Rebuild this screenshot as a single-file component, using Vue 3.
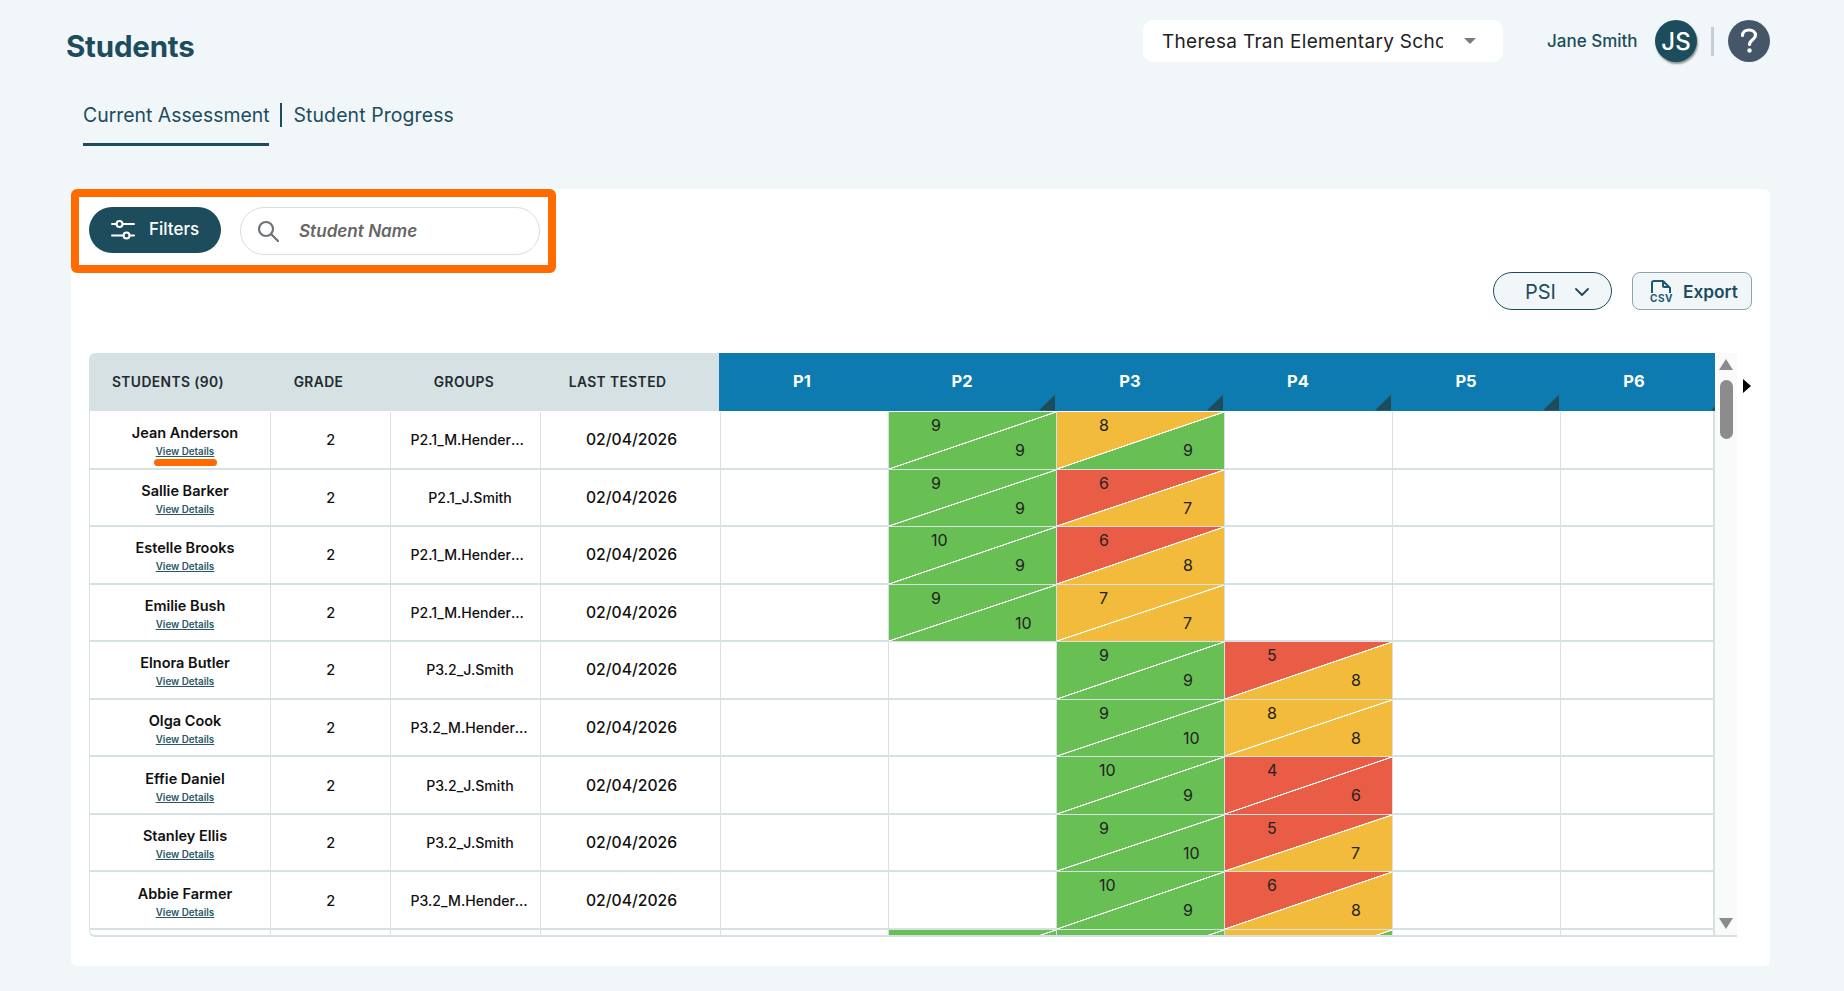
<script setup>
const pCols = ['P1', 'P2', 'P3', 'P4', 'P5', 'P6']
const heads = ['STUDENTS (90)', 'GRADE', 'GROUPS', 'LAST TESTED']
const M = 'M.Henderson'
const J = 'J.Smith'
const rows = [
  { name: 'Jean Anderson', group: 'P2.1_' + M, start: 1, cells: [['g', 'g', 9, 9], ['y', 'g', 8, 9]] },
  { name: 'Sallie Barker', group: 'P2.1_' + J, start: 1, cells: [['g', 'g', 9, 9], ['r', 'y', 6, 7]] },
  { name: 'Estelle Brooks', group: 'P2.1_' + M, start: 1, cells: [['g', 'g', 10, 9], ['r', 'y', 6, 8]] },
  { name: 'Emilie Bush', group: 'P2.1_' + M, start: 1, cells: [['g', 'g', 9, 10], ['y', 'y', 7, 7]] },
  { name: 'Elnora Butler', group: 'P3.2_' + J, start: 2, cells: [['g', 'g', 9, 9], ['r', 'y', 5, 8]] },
  { name: 'Olga Cook', group: 'P3.2_' + M, start: 2, cells: [['g', 'g', 9, 10], ['y', 'y', 8, 8]] },
  { name: 'Effie Daniel', group: 'P3.2_' + J, start: 2, cells: [['g', 'g', 10, 9], ['r', 'r', 4, 6]] },
  { name: 'Stanley Ellis', group: 'P3.2_' + J, start: 2, cells: [['g', 'g', 9, 10], ['r', 'y', 5, 7]] },
  { name: 'Abbie Farmer', group: 'P3.2_' + M, start: 2, cells: [['g', 'g', 10, 9], ['r', 'y', 6, 8]] },
  { name: '', group: '', start: 1, cells: [['g', 'g', '', ''], ['g', 'g', '', ''], ['y', 'g', '', '']] }
]
function cellAt(row, i) {
  return row.cells[i - row.start] || null
}
</script>

<template>
  <div class="page">
    <header class="topbar">
      <h1 class="title">Students</h1>
      <div class="school">
        <span class="school-name">Theresa Tran Elementary School</span>
        <span class="caret"></span>
      </div>
      <span class="user">Jane Smith</span>
      <span class="avatar">JS</span>
      <span class="vsep"></span>
      <span class="help">
        <svg width="18" height="26" viewBox="0 0 18 26" fill="none">
          <path d="M2.500 7.500C2.500 4 5.300 2 9 2s6.500 2.100 6.500 5.300c0 4.400-6 4.400-6 9.200" stroke="#fff" stroke-width="3.200" stroke-linecap="round"/>
          <circle cx="9.500" cy="22.500" r="2.200" fill="#fff"/>
        </svg>
      </span>
    </header>

    <nav class="tabs">
      <span class="tab active">Current Assessment</span>
      <span class="tab-sep"></span>
      <span class="tab second">Student Progress</span>
    </nav>

    <main class="card">
      <div class="highlight"></div>
      <div class="filters">
        <button class="btn-filter">
          <svg width="24" height="22" viewBox="0 0 24 22" fill="none" stroke="#fff" stroke-width="2" stroke-linecap="round">
            <path d="M1 5h4.500M11.500 5H23M1 16.500h11.500M18.500 16.500H23"/>
            <circle cx="8.500" cy="5" r="3"/>
            <circle cx="15.500" cy="16.500" r="3"/>
          </svg>
          <span class="filter-label">Filters</span>
        </button>
        <div class="search">
          <svg width="22" height="22" viewBox="0 0 22 22" fill="none" stroke-width="2.200">
            <circle cx="9" cy="9" r="7" stroke="#6d7378"/>
            <path d="M14 14l7 7" stroke="#6d7378" stroke-linecap="round"/>
          </svg>
          <span class="search-label">Student Name</span>
        </div>
      </div>

      <div class="actions">
        <button class="btn-psi">
          <span>PSI</span>
          <svg width="14" height="8" viewBox="0 0 14 8" fill="none" stroke="#1d4d5c" stroke-width="1.800" stroke-linecap="round" stroke-linejoin="round">
            <path d="M1 1l6 6 6-6"/>
          </svg>
        </button>
        <button class="btn-export">
          <span class="csv-icon">
            <svg width="22" height="14" viewBox="0 0 22 14" fill="none" stroke="#1d5a70" stroke-width="2" stroke-linejoin="round">
              <path d="M2 13V3a2 2 0 0 1 2-2h9l7 7v5M13 1v5a1 1 0 0 0 1 1h6"/>
            </svg>
            <b>CSV</b>
          </span>
          <span>Export</span>
        </button>
      </div>

      <div class="table-wrap">
        <div class="table">
          <div class="thead">
            <div v-for="h in heads" :key="h" class="th">{{ h }}</div>
            <div class="th-gap"></div>
            <div v-for="(p, i) in pCols" :key="p" class="pth" :class="{ sortable: i > 0 }">
              {{ p }}
            </div>
          </div>
          <div class="tbody">
            <div v-for="(r, ri) in rows" :key="ri" class="tr">
              <div class="td student">
                <template v-if="r.name">
                  <span class="name">{{ r.name }}</span>
                  <a class="details">View Details</a>
                  <span v-if="ri === 0" class="mark"></span>
                </template>
              </div>
              <div class="td grade">{{ r.name ? 2 : '' }}</div>
              <div class="td groups"><span>{{ r.group }}</span></div>
              <div class="td date">{{ r.name ? '02/04/2026' : '' }}</div>
              <div v-for="(p, i) in pCols" :key="p" class="td pcell">
                <div
                  v-if="cellAt(r, i)"
                  class="score"
                  :class="['t-' + cellAt(r, i)[0], 'b-' + cellAt(r, i)[1]]"
                >
                  <span class="n1">{{ cellAt(r, i)[2] }}</span>
                  <span class="n2">{{ cellAt(r, i)[3] }}</span>
                </div>
              </div>
            </div>
          </div>
        </div>
        <div class="vscroll">
          <span class="arrow-up"></span>
          <span class="thumb"></span>
          <span class="arrow-down"></span>
        </div>
        <span class="arrow-right"></span>
      </div>
    </main>
  </div>
</template>

<style>
html, body { margin: 0; background: #f1f6f9; }
</style>

<style scoped>
* { box-sizing: border-box; }
.page {
  width: 1844px;
  height: 991px;
  overflow: hidden;
  background: #f1f6f9;
  font-family: Inter, "Liberation Sans", sans-serif;
  color: #1d4d5c;
  display: flex;
  flex-direction: column;
  padding: 20px 74px 0 0;
}
.topbar { display: flex; align-items: center; height: 42px; }
.title { margin: 0 0 0 66px; font-size: 29.500px; font-weight: 700; line-height: 42px; letter-spacing: -0.2px; transform: translateY(5px); }
.school {
  margin-left: auto;
  width: 360px;
  height: 42px;
  background: #fff;
  border-radius: 10px;
  display: flex;
  align-items: center;
  padding-left: 19px;
}
.school-name { width: 281px; overflow: hidden; white-space: nowrap; font-size: 19px; color: #222; letter-spacing: 0.3px; }
.caret { margin-left: 21px; width: 0; height: 0; border-left: 6px solid transparent; border-right: 6px solid transparent; border-top: 6px solid #7a7a7a; }
.user { margin-left: 44px; font-size: 17px; font-weight: 500; width: 108px; white-space: nowrap; }
.avatar {
  width: 42px; height: 42px; border-radius: 50%;
  background: #1d4d5c; color: #fff; font-size: 24px; font-weight: 500;
  display: flex; align-items: center; justify-content: center;
  box-shadow: 1px 2px 2px rgba(0, 0, 0, .4);
}
.vsep { width: 3px; height: 29px; background: #c5ced1; margin: 0 14px; }
.help { width: 42px; height: 42px; border-radius: 50%; background: #465669; display: flex; align-items: center; justify-content: center; }

.tabs { display: flex; align-items: flex-start; margin: 41px 0 0 83px; height: 44px; }
.tab { font-size: 19.400px; line-height: 24px; height: 43px; white-space: nowrap; }
.tab.second { letter-spacing: 0.13px; }
.tab.active { border-bottom: 3px solid #1d4d5c; }
.tab-sep { width: 2px; height: 24px; background: #1d4d5c; margin: 0 11px; }

.card {
  position: relative;
  margin: 42px 0 0 71px;
  width: 1699px;
  height: 777px;
  background: #fff;
  border-radius: 6px;
  padding: 18px 0 0 18px;
}
.highlight {
  position: absolute; left: 0; top: 0;
  width: 485px; height: 84px;
  border: 8px solid #ff6b00;
  border-radius: 6px;
}
.filters { display: flex; align-items: flex-start; gap: 19px; height: 48px; }
.btn-filter {
  width: 132px; height: 46px; border: 0; border-radius: 23px;
  background: #1d4d5c; color: #fff;
  display: flex; align-items: center; gap: 14px; padding: 0 0 0 22px;
  font: 500 17px Inter, sans-serif;
}
.filter-label { padding-bottom: 2px; }
.search {
  width: 300px; height: 48px;
  border: 1px solid #d5e0e3; border-radius: 24px;
  display: flex; align-items: center; gap: 20px; padding-left: 16px;
  color: #666; font-size: 17.100px; font-weight: 600; font-style: italic;
}
.search-label { padding-bottom: 1px; }
.actions { display: flex; justify-content: flex-end; gap: 20px; margin-top: 17px; padding-right: 18px; }
.btn-psi {
  width: 119px; height: 38px; border: 1px solid #1d4d5c; border-radius: 19px;
  background: #f1f6f9; color: #1d4d5c;
  display: flex; align-items: center; gap: 19px; padding: 2px 0 0 31px;
  font: 400 20px Inter, sans-serif;
}
.btn-export {
  width: 120px; height: 38px; border: 1px solid #8aa5ad; border-radius: 8px;
  background: #f1f6f9; color: #1d4d5c;
  display: flex; align-items: center; gap: 10px; padding: 0 0 0 17px;
  font: 600 17.300px Inter, sans-serif;
}
.csv-icon { display: flex; flex-direction: column; align-items: center; line-height: 1; color: #1d5a70; }
.csv-icon b { font-size: 10px; font-weight: 700; letter-spacing: 0.5px; margin-top: -1px; }

.table-wrap { display: flex; align-items: flex-start; margin-top: 43px; }
.table {
  width: 1626px; height: 584px; overflow: hidden;
  display: flex; flex-direction: column;
  border-bottom: 2px solid #d6e1e3;
  border-radius: 6px 0 0 6px;
  border-left: 1px solid #d6e1e3;
}
.thead { flex: none; display: grid; grid-template-columns: 156px 145px 146px 161px 21px repeat(6, 168px); height: 57.500px; width: 1640px; background: #d6e1e3; }
.th { display: flex; align-items: center; justify-content: center; font-size: 13.800px; font-weight: 600; color: #1f2a30; letter-spacing: 0.4px; }
.pth { position: relative; background: #0d7bb0; color: #fff; font-size: 16.500px; font-weight: 700; display: flex; align-items: center; justify-content: center; padding: 0 2px 1px 0; }
.pth.sortable { padding-right: 18px; }
.pth.sortable::after {
  content: ""; position: absolute; right: 0; bottom: 0; width: 16px; height: 16px;
  background: #1d4d5c; clip-path: polygon(100% 0, 100% 100%, 0 100%);
}
.tbody { flex: 1; min-height: 0; overflow: hidden; padding-top: 1.500px; border-right: 2px solid #d6e1e3; }
.tr { display: grid; grid-template-columns: 181px 119.500px 150.500px 180px repeat(6, 168px); height: 57.560px; width: 1640px; }
.td { border-right: 1px solid #d6e1e3; border-bottom: 2px solid #d6e1e3; color: #111; display: flex; align-items: center; justify-content: center; min-width: 0; }
.student { position: relative; flex-direction: column; padding: 3px 0 0 10px; }
.name { font-size: 14.500px; font-weight: 600; line-height: 18px; white-space: nowrap; }
.details { font-size: 9.800px; font-weight: 600; color: #2c5866; text-decoration: underline; line-height: 12px; margin-top: 4px; white-space: nowrap; }
.mark { position: absolute; left: 64px; top: 47px; width: 63px; height: 7px; background: #ff6b00; border-radius: 4px; }
.grade { font-size: 14.500px; font-weight: 500; padding-left: 1px; }
.groups { font-size: 14.100px; font-weight: 500; padding: 0 10.500px 0 20px; }
.groups span { width: 100%; text-align: center; overflow: hidden; white-space: nowrap; text-overflow: ellipsis; }
.date { font-size: 15.700px; font-weight: 500; padding-left: 2px; }
.pcell { align-items: stretch; justify-content: stretch; padding: 0; }
.score {
  --t: #68bf54; --b: #68bf54;
  position: relative; width: 100%; height: calc(100% + 1px);
  background: linear-gradient(to bottom right, var(--t) calc(50% - 0.800px), #fff calc(50% - 0.400px), #fff calc(50% + 0.400px), var(--b) calc(50% + 0.800px));
  color: #222; font-size: 16px;
}
.t-g { --t: #68bf54; }
.t-y { --t: #f2bb3b; }
.t-r { --t: #e95d46; }
.b-g { --b: #68bf54; }
.b-y { --b: #f2bb3b; }
.b-r { --b: #e95d46; }
.n1 { position: absolute; left: 42px; top: 3px; }
.n2 { position: absolute; left: 126px; top: 28px; }

.vscroll { width: 22px; height: 584px; background: #fafafa; border-bottom: 2px solid #d6e1e3; display: flex; flex-direction: column; align-items: center; padding-top: 6px; }
.arrow-up { width: 0; height: 0; border-left: 7px solid transparent; border-right: 7px solid transparent; border-bottom: 11px solid #8c8c8c; }
.thumb { width: 13px; height: 59px; background: #8c8c8c; border-radius: 7px; margin-top: 10px; }
.arrow-down { width: 0; height: 0; border-left: 7px solid transparent; border-right: 7px solid transparent; border-top: 11px solid #8c8c8c; margin-top: 479px; }
.arrow-right { width: 0; height: 0; margin: 26px 0 0 6px; border-top: 7.500px solid transparent; border-bottom: 7.500px solid transparent; border-left: 8px solid #000; }
</style>
